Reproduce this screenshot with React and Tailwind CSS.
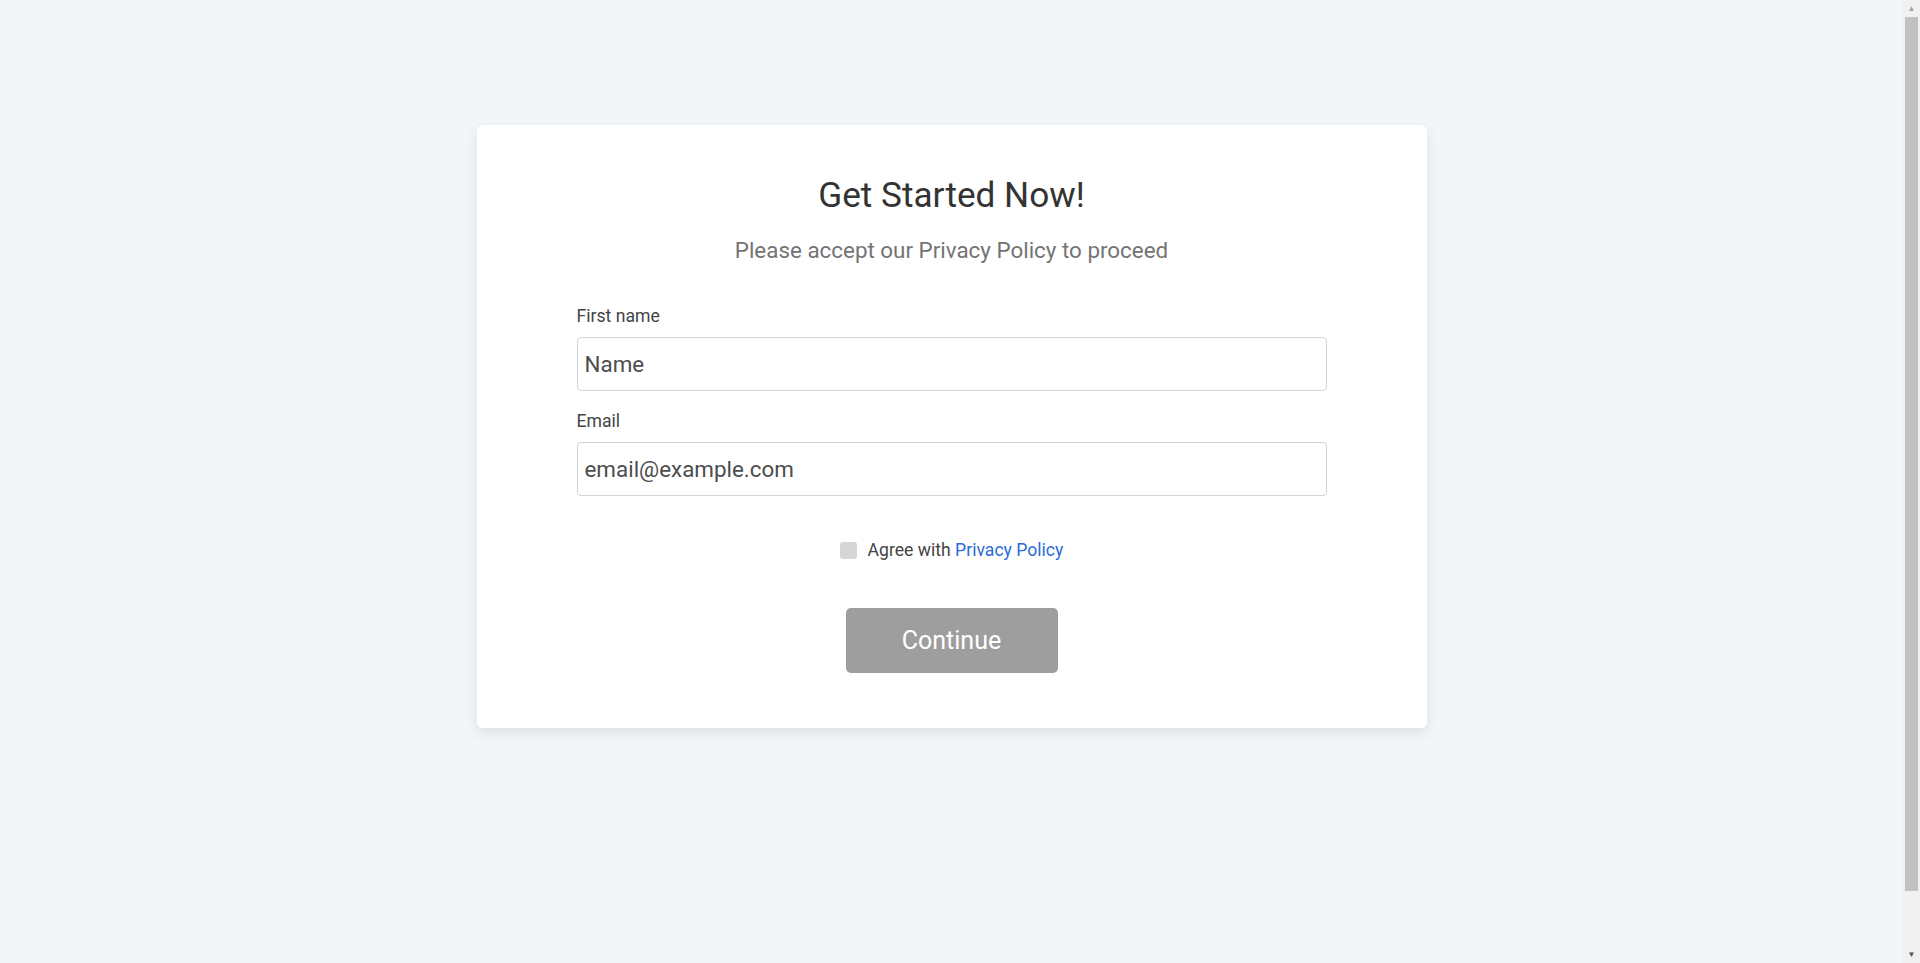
import React, { useState } from "react";

export default function App() {
  const [agreed, setAgreed] = useState(false);

  return (
    <div className="flex w-full bg-[#f3f6f9] font-['Roboto','Liberation_Sans',sans-serif] leading-[normal]">
      <div className="flex-1 min-h-[1024px] pt-[125px]">
        {/* Card */}
        <div className="mx-auto w-[950px] bg-white rounded-md shadow-[0_5px_14px_rgba(0,0,0,0.09)] px-[100px] pt-[49px] pb-[55px]">
          <h1 className="text-center text-[35.2px] text-[#333333] font-normal">
            Get Started Now!
          </h1>
          <p className="mt-[21px] text-center text-[22.4px] text-[#747474]">
            Please accept our Privacy Policy to proceed
          </p>

          {/* Form fields */}
          <div className="mt-[43px]">
            <label className="block text-[17.6px] text-[#444444]">First name</label>
            <input
              type="text"
              placeholder="Name"
              className="mt-[11px] block w-full h-[54px] rounded border border-[#d4d4d4] px-[7px] text-[22.4px] text-[#444444] placeholder:text-[#4d4d4d] outline-none"
            />

            <label className="mt-[20px] block text-[17.6px] text-[#444444]">Email</label>
            <input
              type="email"
              placeholder="email@example.com"
              className="mt-[11px] block w-full h-[54px] rounded border border-[#d4d4d4] px-[7px] text-[22.4px] text-[#444444] placeholder:text-[#4d4d4d] outline-none"
            />
          </div>

          {/* Agree checkbox */}
          <div className="mt-[44px] flex items-center justify-center gap-[11px]">
            <button
              type="button"
              onClick={() => setAgreed(!agreed)}
              className={
                agreed
                  ? "w-[17px] h-[17px] rounded-[3px] bg-[#2f6bd5]"
                  : "w-[17px] h-[17px] rounded-[3px] bg-[#d6d6d6]"
              }
            />
            <span className="text-[17.6px] text-[#444444]">
              Agree with <a href="#" className="text-[#2b6bd6]">Privacy Policy</a>
            </span>
          </div>

          {/* Continue */}
          <div className="mt-[48px] flex justify-center">
            <button
              type="button"
              className="w-[212px] h-[65px] rounded-[5px] bg-[#9e9e9e] text-white text-[25px] font-normal"
            >
              Continue
            </button>
          </div>
        </div>
      </div>

      {/* scrollbar strip */}
      <div className="sticky top-0 h-screen w-[17px] shrink-0 bg-[#f1f1f1] flex flex-col items-center">
        <div className="h-[17px] flex items-center justify-center text-[8px] text-[#a3a3a3]">▲</div>
        <div className="w-[13px] h-[874px] bg-[#c1c1c1]" />
        <div className="flex-1" />
        <div className="h-[17px] flex items-center justify-center text-[8px] text-[#505050]">▼</div>
      </div>
    </div>
  );
}
